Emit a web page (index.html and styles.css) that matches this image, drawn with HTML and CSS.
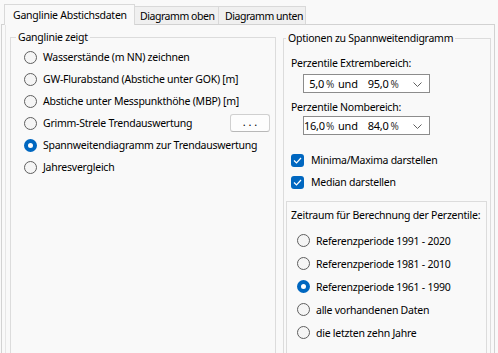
FILE: index.html
```html
<!DOCTYPE html>
<html lang="de">
<head>
<meta charset="utf-8">
<title>Ganglinie</title>
<link rel="stylesheet" href="styles.css">
</head>
<body>
<div class="tabstrip">
  <div class="tab active">Ganglinie Abstichsdaten</div>
  <div class="tab tab2">Diagramm oben</div>
  <div class="tab tab3">Diagramm unten</div>
</div>
<div class="panel">
  <div class="page">
    <fieldset class="group group-left">
      <legend>Ganglinie zeigt</legend>
      <div class="row"><span class="radio"></span><span class="lbl">Wasserstände (m NN) zeichnen</span></div>
      <div class="row"><span class="radio"></span><span class="lbl">GW-Flurabstand (Abstiche unter GOK) [m]</span></div>
      <div class="row"><span class="radio"></span><span class="lbl">Abstiche unter Messpunkthöhe (MBP) [m]</span></div>
      <div class="row"><span class="radio"></span><span class="lbl">Grimm-Strele Trendauswertung</span><button class="dots">. . .</button></div>
      <div class="row"><span class="radio checked"></span><span class="lbl">Spannweitendiagramm zur Trendauswertung</span></div>
      <div class="row"><span class="radio"></span><span class="lbl">Jahresvergleich</span></div>
    </fieldset>
    <fieldset class="group group-right">
      <legend>Optionen zu Spannweitendigramm</legend>
      <div class="field-label first">Perzentile Extrembereich:</div>
      <div class="combo"><span class="combo-text"><span class="n1">5,0</span><span class="pct">%</span><span class="und">und</span><span class="n2">95,0</span><span class="pct">%</span></span><svg class="chev" width="9" height="5" viewBox="0 0 9 5"><polyline points="0.5,0.5 4.5,4.5 8.5,0.5" fill="none" stroke="#606060" stroke-width="1"/></svg></div>
      <div class="field-label">Perzentile Nombereich:</div>
      <div class="combo combo2"><span class="combo-text"><span class="n1">16,0</span><span class="pct">%</span><span class="und">und</span><span class="n2">84,0</span><span class="pct">%</span></span><svg class="chev" width="9" height="5" viewBox="0 0 9 5"><polyline points="0.5,0.5 4.5,4.5 8.5,0.5" fill="none" stroke="#606060" stroke-width="1"/></svg></div>
      <div class="check-row first"><span class="check"><svg width="9" height="7" viewBox="0 0 9 7"><polyline points="1,3.5 3.5,6 8,1" fill="none" stroke="#fff" stroke-width="1.2"/></svg></span><span class="lbl">Minima/Maxima darstellen</span></div>
      <div class="check-row"><span class="check"><svg width="9" height="7" viewBox="0 0 9 7"><polyline points="1,3.5 3.5,6 8,1" fill="none" stroke="#fff" stroke-width="1.2"/></svg></span><span class="lbl">Median darstellen</span></div>
      <div class="period">
        <div class="period-title">Zeitraum für Berechnung der Perzentile:</div>
        <div class="prow"><span class="radio"></span><span class="lbl">Referenzperiode 1991 - 2020</span></div>
        <div class="prow"><span class="radio"></span><span class="lbl">Referenzperiode 1981 - 2010</span></div>
        <div class="prow"><span class="radio checked"></span><span class="lbl">Referenzperiode 1961 - 1990</span></div>
        <div class="prow"><span class="radio"></span><span class="lbl">alle vorhandenen Daten</span></div>
        <div class="prow"><span class="radio"></span><span class="lbl">die letzten zehn Jahre</span></div>
      </div>
    </fieldset>
  </div>
</div>
</body>
</html>
```
FILE: styles.css
```css
html, body {
  margin: 0;
  padding: 0;
}
body {
  width: 498px;
  height: 353px;
  overflow: hidden;
  background: #f9f9f9;
  font-family: "Noto Sans", "Segoe UI", sans-serif;
  font-size: 10.5px;
  letter-spacing: -0.25px;
  color: #000;
}
.tabstrip {
  display: flex;
  align-items: flex-end;
  height: 24px;
  padding-left: 4px;
  box-sizing: border-box;
  position: relative;
  z-index: 1;
}
.tab {
  height: 18px;
  box-sizing: border-box;
  border: 1px solid #d9d9d9;
  border-bottom: none;
  background: #f0f0f0;
  padding: 0 0 0 5px;
  line-height: 18px;
  margin-left: -1px;
  white-space: nowrap;
  overflow: hidden;
  letter-spacing: -0.45px;
}
.tab.active {
  width: 131px;
  height: 21px;
  margin-bottom: -1px;
  background: #f9f9f9;
  padding: 0 0 0 8px;
  line-height: 20px;
  margin-left: 0;
  letter-spacing: -0.25px;
}
.tab2 {
  width: 85px;
}
.tab3 {
  width: 88px;
  padding-left: 6px;
}
.panel {
  margin-left: 1px;
  width: 494px;
  height: 340px;
  box-sizing: border-box;
  border: 1px solid #d2d2d2;
  border-bottom: none;
  background: #f9f9f9;
}
.page {
  margin-left: 3px;
  height: 100%;
  border-left: 1px solid #e6e6e6;
  display: grid;
  grid-template-columns: 266px 208px;
  column-gap: 7px;
  padding-left: 4px;
  align-items: start;
}
.group {
  margin: 0;
  border: 1px solid #dcdcdc;
  border-bottom: none;
  min-width: 0;
  height: 340px;
  box-sizing: border-box;
}
.group legend {
  padding: 0 2px;
  line-height: 16px;
}
.group-left {
  margin-top: 4px;
  padding: 1px 5px 0 13px;
}
.group-left legend {
  margin-left: -8px;
}
.group-right {
  margin-top: 5px;
  padding: 0 0 0 7px;
}
.group-right legend {
  margin-left: -5px;
}
.row {
  display: flex;
  align-items: center;
  height: 22px;
}
.lbl {
  white-space: nowrap;
}
.radio {
  width: 13px;
  height: 13px;
  box-sizing: border-box;
  border: 1px solid #5f5f5f;
  border-radius: 50%;
  background: #f5f5f5;
  margin-right: 6px;
  flex: none;
}
.radio.checked {
  border: 4px solid #0067c0;
  background: #fff;
}
.dots {
  margin-left: auto;
  width: 40px;
  height: 18px;
  box-sizing: border-box;
  border: 1px solid #d0d0d0;
  border-bottom-color: #b8b8b8;
  border-radius: 3px;
  background: #fdfdfd;
  font-family: inherit;
  font-size: 11px;
  letter-spacing: 0;
  line-height: 14px;
  padding: 0 0 2px;
  color: #000;
}
.field-label {
  line-height: 16px;
  margin-top: 5px;
  white-space: nowrap;
}
.field-label.first {
  margin-top: 9px;
}
.combo {
  display: flex;
  align-items: center;
  margin: 3px 0 6px 12px;
  width: 127px;
  height: 19px;
  box-sizing: border-box;
  border: 1px solid #8c8c8c;
  background: #fff;
  padding: 0 7px 0 0;
}
.combo2 {
  margin-top: 1px;
}
.combo-text {
  white-space: nowrap;
  flex: 1;
  display: flex;
  align-items: baseline;
  font-size: 11px;
}
.n1 {
  width: 20px;
  text-align: right;
}
.pct {
  color: #333;
  font-size: 10px;
  margin-left: 2px;
}
.und {
  margin-left: 4px;
}
.n2 {
  margin-left: 10px;
}
.chev {
  flex: none;
  margin-top: 1px;
}
.check-row {
  display: flex;
  align-items: center;
  height: 22px;
}
.check-row.first {
  margin-top: 14px;
}
.check {
  width: 13px;
  height: 13px;
  border-radius: 3px;
  background: #0067c0;
  margin-right: 7px;
  display: flex;
  align-items: center;
  justify-content: center;
  flex: none;
}
.period {
  margin: 8px 0 0 -5px;
  width: 201px;
  height: 160px;
  box-sizing: border-box;
  border: 1px solid #dcdcdc;
  border-bottom: none;
  padding: 5px 0 0 4px;
}
.period-title {
  line-height: 16px;
  white-space: nowrap;
  margin-bottom: 6px;
}
.prow {
  display: flex;
  align-items: center;
  height: 23px;
  padding-left: 6px;
}
```
